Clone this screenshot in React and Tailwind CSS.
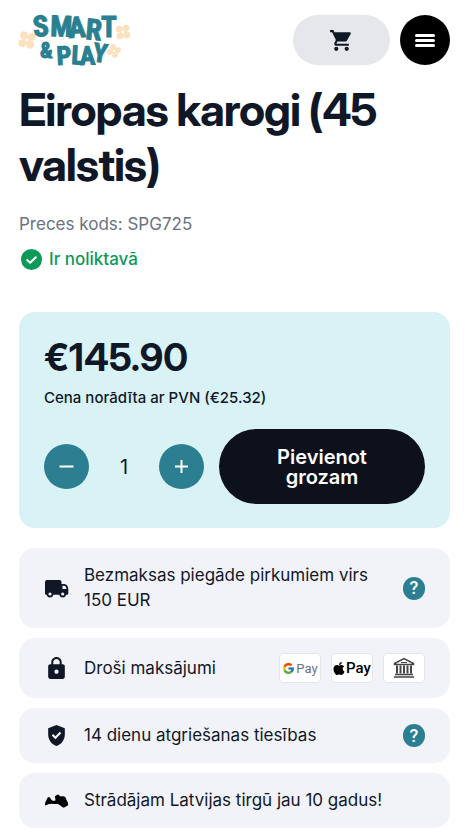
import React, { useState } from 'react'
import { MdShoppingCart, MdLock, MdGppGood } from 'react-icons/md';
import { FaApple } from 'react-icons/fa';
import { FcGoogle } from 'react-icons/fc';

function Flower({ x, y, r, turn = 0 }) {
    return (
        <g transform={`translate(${x} ${y}) rotate(${turn})`} fill="#fde0bd">
            <circle cx={-r * 0.5} cy={-r * 0.5} r={r * 0.48} />
            <circle cx={r * 0.5} cy={-r * 0.5} r={r * 0.48} />
            <circle cx={-r * 0.5} cy={r * 0.5} r={r * 0.48} />
            <circle cx={r * 0.5} cy={r * 0.5} r={r * 0.48} />
            <circle r={r * 0.5} />
            <circle r={r * 0.2} fill="#fff" />
        </g>
    )
}

function Logo() {
    return (
        <svg width="112" height="54" viewBox="0 0 112 54" role="img" aria-label="Smart & Play" className="overflow-visible">
            <Flower x={8} y={27} r={8} turn={12} />
            <Flower x={104} y={19} r={7} turn={-8} />
            <Flower x={95} y={38} r={6} turn={30} />
            <g
                fill="#2a7f90"
                stroke="#2a7f90"
                strokeWidth="1"
                fontWeight="700"
                fontFamily="'Roboto Condensed', 'Open Sans Condensed', Roboto, sans-serif"
            >
                <text fontSize="29" x="15 31 50 66 82" y="24 23 25 26 24" rotate="-6 2 -4 5 0">SMART</text>
                <text fontSize="22" x="21" y="45">&amp;</text>
                <text fontSize="26" x="38 52 61 73" y="52 51 52 48" rotate="-3 3 -2 8">PLAY</text>
            </g>
        </svg>
    )
}

function Header() {
    return (
        <header className="flex items-center justify-between h-20">
            <a href="#"><Logo /></a>
            <div className="flex gap-[10px]">
                <button aria-label="Grozs" className="flex items-center justify-center w-[97px] h-[50px] rounded-full bg-gray-200 text-gray-900">
                    <MdShoppingCart size={25} />
                </button>
                <button aria-label="Izvēlne" className="flex flex-col items-center justify-center gap-[2px] size-[50px] rounded-full bg-black">
                    <span className="w-5 h-[3px] rounded-xs bg-white" />
                    <span className="w-5 h-[3px] rounded-xs bg-white" />
                    <span className="w-5 h-[3px] rounded-xs bg-white" />
                </button>
            </div>
        </header>
    )
}

function CheckCircle() {
    return (
        <svg width="25" height="25" viewBox="0 0 25 25">
            <circle cx="12.5" cy="12.5" r="10.5" fill="#0c9a58" />
            <path d="M8.2 13l3 2.8 5.6-5.6" fill="none" stroke="#fff" strokeWidth="2" strokeLinecap="round" strokeLinejoin="round" />
        </svg>
    )
}

function PriceCard() {
    const [count, setCount] = useState(1);

    return (
        <section className="p-[25px] pb-6 rounded-2xl bg-[#d8f2f6]">
            <p className="text-[38px] leading-10 font-bold font-['Inter_Display',Inter,sans-serif]">€145.90</p>
            <p className="mt-2 text-[15px] leading-[26px] font-medium">Cena norādīta ar PVN (€25.32)</p>
            <div className="flex items-center gap-[15px] mt-[18px]">
                <div className="flex items-center">
                    <button aria-label="Mazāk" onClick={() => setCount(Math.max(1, count - 1))} className="flex items-center justify-center size-[45px] rounded-full bg-[#2b7f91]">
                        <svg width="15" height="15" viewBox="0 0 15 15"><path d="M0.5 7.5h14" stroke="#fff" strokeWidth="2" /></svg>
                    </button>
                    <input
                        aria-label="Daudzums"
                        value={count}
                        onChange={(e) => setCount(Number(e.target.value) || 1)}
                        className="w-[70px] text-center text-xl"
                    />
                    <button aria-label="Vairāk" onClick={() => setCount(count + 1)} className="flex items-center justify-center size-[45px] rounded-full bg-[#2b7f91]">
                        <svg width="15" height="15" viewBox="0 0 15 15"><path d="M1 7.5h13M7.5 1v13" stroke="#fff" strokeWidth="2" /></svg>
                    </button>
                </div>
                <button className="flex-1 h-[75px] px-10 rounded-full bg-[#0d111c] text-white text-xl leading-5 font-semibold">
                    Pievienot grozam
                </button>
            </div>
        </section>
    )
}

function Help() {
    return (
        <button aria-label="Palīdzība" className="shrink-0 flex items-center justify-center w-[22px] h-[23px] rounded-full bg-[#2b7f91] text-white text-lg leading-none font-medium font-[Roboto,sans-serif]">
            ?
        </button>
    )
}

function Payment({ children }) {
    return (
        <span className="flex items-center justify-center gap-px w-[42px] h-[30px] rounded-sm border border-gray-200 bg-white font-[Roboto,sans-serif]">
            {children}
        </span>
    )
}

function Bank() {
    return (
        <svg width="22" height="22" viewBox="0 0 22 22" fill="none" stroke="#444">
            <path d="M1.5 6.5L11 1.5l9.5 5v1h-19z" strokeWidth="1.5" />
            <path d="M8 5.5h6" strokeWidth="1" />
            <path d="M4 8.5v8M7.5 8.5v8M11 8.5v8M14.5 8.5v8M18 8.5v8" strokeWidth="2" />
            <path d="M2 17.5h18M1 20h20" strokeWidth="1.5" />
        </svg>
    )
}

function Truck() {
    return (
        <svg width="25" height="25" viewBox="0 0 25 25">
            <path d="M3 4h12.500a2 2 0 0 1 2 2v2h2.300c2.700 0 4.500 2.300 4.500 5v4.500a1.200 1.200 0 0 1-1.200 1.200H2.200A1.200 1.200 0 0 1 1 17.500V6a2 2 0 0 1 2-2z" fill="currentColor" />
            <path d="M18.500 9.800h1.400c1.300 0 2.300 1.200 2.600 3.200h-4z" fill="#f2f3f8" />
            <circle cx="6" cy="18" r="2.500" fill="#f2f3f8" stroke="currentColor" strokeWidth="1.800" />
            <circle cx="18.700" cy="18" r="2.500" fill="#f2f3f8" stroke="currentColor" strokeWidth="1.800" />
        </svg>
    )
}

function Latvia() {
    return (
        <svg width="25" height="25" viewBox="0 0 25 25">
            <path d="M1 17.500C.8 15 1.500 13.500 2.500 12c.5-2 1.500-2.800 2.700-3 1.300.8 1.600 2.200 2.700 3.200 1 .6 2.700.9 3.600 0 .2-1.400-.9-2.500-.5-3.700 1-.8 2-1.900 3.200-2 1 .3 1.300 1.700 2.500 2 1.700-.3 3.500-.3 4.800 1 .8 1.300.9 2.600 1.700 3.800.8 1.300 1.300 3 .6 4.200-1 .9-2.600 1-3.600 2-1.400.2-2.300-.8-3.200-1.600-1.300-.6-2.400-1.900-3.800-2.100-2 .8-4.200-.2-6.500.1-2-.1-3.400.5-5.700 1.600z" fill="#000" />
        </svg>
    )
}

function Feature({ icon, text, children }) {
    return (
        <li className="flex items-center gap-[15px] px-[25px] py-[15px] rounded-2xl bg-[#f2f3f8]">
            <span className="shrink-0">{icon}</span>
            <p className="flex-1 text-[17px] leading-[25px]">{text}</p>
            {children}
        </li>
    )
}

function App() {
    return (
        <div className="pl-[19px] pr-4 pb-1 bg-white text-gray-900 font-[Inter,sans-serif]">
            <Header />
            <main>
                <h1 className="mt-[2px] text-[45px] leading-[55px] font-bold tracking-tight font-['Inter_Display',Inter,sans-serif]">Eiropas karogi (45 valstis)</h1>
                <p className="mt-5 text-[17px] leading-[25px] text-gray-500">Preces kods: SPG725</p>
                <p className="flex items-center gap-[5px] mt-[10px] mb-10 text-[17px] leading-[25px] font-medium text-[#0c9a58]">
                    <CheckCircle />
                    Ir noliktavā
                </p>
                <PriceCard />
                <ul className="flex flex-col gap-[10px] mt-5">
                    <Feature icon={<Truck />} text="Bezmaksas piegāde pirkumiem virs 150 EUR">
                        <Help />
                    </Feature>
                    <Feature icon={<MdLock size={25} />} text="Droši maksājumi">
                        <div className="flex gap-[10px]">
                            <Payment>
                                <FcGoogle size={13} />
                                <span className="text-[13px] leading-none text-gray-500">Pay</span>
                            </Payment>
                            <Payment>
                                <FaApple className="w-[12px] h-[15px]" color="#000" />
                                <span className="text-[15px] leading-none font-medium text-black">Pay</span>
                            </Payment>
                            <Payment><Bank /></Payment>
                        </div>
                    </Feature>
                    <Feature icon={<MdGppGood size={25} />} text="14 dienu atgriešanas tiesības">
                        <Help />
                    </Feature>
                    <Feature icon={<Latvia />} text="Strādājam Latvijas tirgū jau 10 gadus!" />
                </ul>
            </main>
        </div>
    )
}

export default App
